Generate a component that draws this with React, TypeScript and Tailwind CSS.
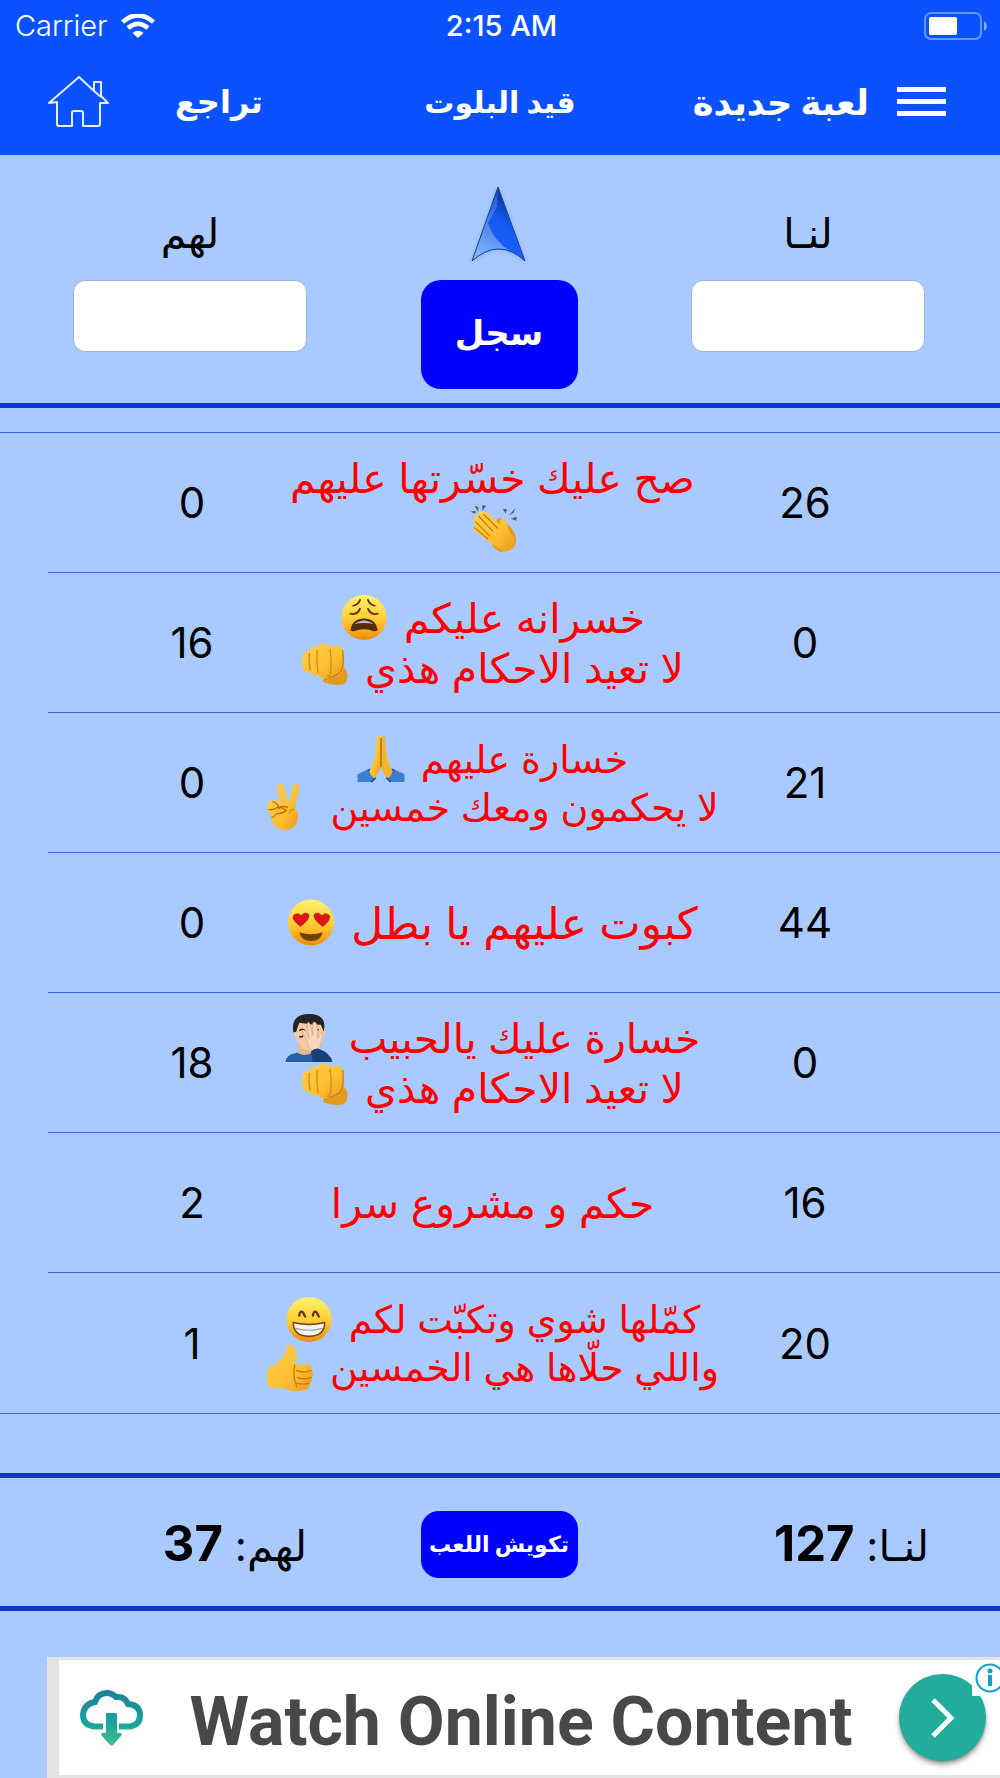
import type { ReactNode } from "react"

type EmojiName = "clap" | "weary" | "fist" | "pray" | "victory" | "hearts" | "facepalm" | "grin" | "thumb"

type Round = {
  us: number
  them: number
  size: string
  lines: { text: string; emoji?: EmojiName; wrap?: boolean }[]
}

const LARGE = "text-[44px] leading-[56px]"
const MEDIUM = "text-[41px] leading-[50px]"
const SMALL = "text-[38px] leading-[48px]"

const rounds: Round[] = [
  { us: 26, them: 0, size: MEDIUM, lines: [{ text: "صح عليك خسّرتها عليهم", emoji: "clap", wrap: true }] },
  {
    us: 0,
    them: 16,
    size: MEDIUM,
    lines: [
      { text: "خسرانه عليكم", emoji: "weary" },
      { text: "لا تعيد الاحكام هذي", emoji: "fist" },
    ],
  },
  {
    us: 21,
    them: 0,
    size: SMALL,
    lines: [
      { text: "خسارة عليهم", emoji: "pray" },
      { text: "لا يحكمون ومعك خمسين", emoji: "victory" },
    ],
  },
  { us: 44, them: 0, size: LARGE, lines: [{ text: "كبوت عليهم يا بطل", emoji: "hearts" }] },
  {
    us: 0,
    them: 18,
    size: MEDIUM,
    lines: [
      { text: "خسارة عليك يالحبيب", emoji: "facepalm" },
      { text: "لا تعيد الاحكام هذي", emoji: "fist" },
    ],
  },
  { us: 16, them: 2, size: MEDIUM, lines: [{ text: "حكم و مشروع سرا" }] },
  {
    us: 20,
    them: 1,
    size: SMALL,
    lines: [
      { text: "كمّلها شوي وتكبّت لكم", emoji: "grin" },
      { text: "واللي حلّاها هي الخمسين", emoji: "thumb" },
    ],
  },
]

const drawings: Record<EmojiName, ReactNode> = {
  clap: (
    <>
      <path d="M1 8l5-1 0 3zM5 2l4 1 0 5zM13 1l4 1-4 5zM34 5l4 0-1 5zM47 4l-2 5-5 3zM48 13l0 4-6-2z" fill="#5c5c5c" />
      <path d="M28 16q3-3 6 0l9 9q6 8 4 15-6 9-16 9l-8-6z" fill="#e69a17" />
      <path
        d="M6 14q-1-4 3-4 1-3 5-1 3-2 6 1l11 12q-1-7 3-7 3 0 5 7 1 6 5 11 6 8-1 13-7 5-14-1L6 28q-3-4 0-5-4-5 0-9z"
        fill="url(#skin)"
      />
      <path d="M14 10l15 15M9 12l15 16M6 18l15 15M5 24l14 12" stroke="#c77a0c" strokeWidth="1.2" fill="none" />
    </>
  ),
  weary: (
    <>
      <circle cx="24" cy="24" r="23" fill="url(#face)" />
      <path d="M13 12q5-1 7-6M28 6q2 5 7 6M10 20q7 2 10-5M28 15q3 7 10 5" stroke="#5a3008" strokeWidth="1.8" fill="none" strokeLinecap="round" />
      <path d="M10 37q2-12 14-12t14 12q-3 2-7 0-7-2-14 0-5 2-7 0z" fill="#552b09" />
      <path d="M14 31q10-8 20 0-10-3-20 0z" fill="#b9b9c2" />
    </>
  ),
  fist: (
    <>
      <path d="M22 37q0-3 6-3l12-14q7 6 7 12 0 7-4 9-9 2-17-1-4 0-4-3z" fill="#e19a1c" />
      <path
        d="M1 13q0-5 7-6 0-4 7-4 2-3 8-3 5 0 7 3 9-3 12 2 3 9 1 20-1 8-9 9l-10 1q-5 0-7-3-6 1-8-3-6 0-8-5-1-5 0-11z"
        fill="url(#skin)"
      />
      <path d="M8 9q-1 9 1 18M16 6q-1 12 1 24M29 5q2 12 1 22 0 5-4 6" stroke="#d58b12" strokeWidth="1.4" fill="none" />
      <path d="M42 6q2 16-2 22-4 5-12 6" stroke="#c07c0f" strokeWidth="1.2" fill="none" />
    </>
  ),
  pray: (
    <>
      <path d="M0 40l13-6 6 9-5 5H0zM48 40l-13-6-6 9 5 5h14z" fill="#3c7ed0" />
      <path d="M11 35l7 9-4 4M37 35l-7 9 4 4" stroke="#1f559f" strokeWidth="2" fill="none" />
      <path d="M20 2q2-2 4 0l0 31q-2 5-6 11-4 0-6-7 6-10 7-22z" fill="url(#skin)" />
      <path d="M28 2q-2-2-4 0l0 31q2 5 6 11 4 0 6-7-6-10-7-22z" fill="#f5b42d" />
      <path d="M24 3v30" stroke="#995b08" strokeWidth="1.2" />
    </>
  ),
  victory: (
    <>
      <path
        d="M11 5q-1-4 3-4 3 0 4 4l4 16 5-17q1-4 4-3 3 1 2 5l-4 20q4 3 3 10-1 12-14 12Q8 48 5 37l-1-6q-3-1-3-6-1-7 4-7l5-1 4 5z"
        fill="url(#skin)"
      />
      <path d="M6 19q6 1 7 8M2 27q5 1 9-2 5-1 9 3-4 4-9 3-5 5-6 4M12 25q5-2 10 0" stroke="#bd730b" strokeWidth="1.4" fill="none" />
      <path d="M28 27q-4 0-5 4" stroke="#d58b12" strokeWidth="1.2" fill="none" />
    </>
  ),
  hearts: (
    <>
      <circle cx="24" cy="24" r="23.500" fill="url(#face)" />
      <path d="M13 28Q4 21 6 17q4-4 8 0 4-5 8-1 1 5-9 12zM36 28q-10-7-9-12 4-4 8 1 4-4 8 0 1 5-7 11z" fill="#df1515" stroke="#b60b0b" strokeWidth=".6" />
      <path d="M12 34q12 4 24 0-2 9-12 9t-12-9z" fill="#754006" />
    </>
  ),
  facepalm: (
    <>
      <path d="M0 49q1-8 10-9l11-3 19 4q8 2 8 8z" fill="#285fa8" />
      <path d="M12 28l1 12q8 4 15-1l2-11z" fill="#e6b990" />
      <path d="M9 14Q9 4 24 4t15 12q3 2 0 7-2 14-14 14-11 0-14-13-5-4-2-10z" fill="#f2cba8" />
      <path d="M8 19Q5 0 24 0t15 18l-3-7q-11 0-22-2l-3 9z" fill="#242424" />
      <path d="M14 17q3-3 6 0M30 16h4M14 23q3 1 4-1" stroke="#382219" strokeWidth="1.5" fill="none" />
      <path d="M17 17q2-2 4 2l3 6-2-15q2-3 3 1l3 11V9q3-2 4 2l1 14 3-6q3 0 1 6l-2 10-6 5q-6-5-7-13z" fill="#f7d9bd" stroke="#dca985" strokeWidth=".8" />
      <path d="M26 38q5-4 9-2 11 4 12 13H28z" fill="#174079" />
    </>
  ),
  grin: (
    <>
      <circle cx="24" cy="24" r="23" fill="url(#face)" />
      <path d="M14 20q1-6 4-3l2 4M28 20q1-6 4-3l2 4" stroke="#683805" strokeWidth="2.4" fill="none" strokeLinecap="round" />
      <path d="M8 27q16 4 32 0 0 14-16 14T8 27z" fill="#f4f4f4" stroke="#78420b" strokeWidth="1.5" />
      <path d="M10 33q14 4 28 0" stroke="#9b9b9b" strokeWidth="1.2" fill="none" />
    </>
  ),
  thumb: (
    <>
      <path
        d="M20 5q0-5 5-4 6 3 6 13l-2 7h13q5 1 4 6 3 4 0 7 1 5-2 6 0 7-6 7-12 3-22-2-7 1-14-1-3-9 0-20 8-2 13-9 5-4 5-10z"
        fill="url(#skin)"
      />
      <path d="M46 27q-8 3-16 0M46 34q-8 3-15 0M44 40q-8 2-14 0M29 21q-3 10 2 23" stroke="#c97e0d" strokeWidth="1.4" fill="none" />
    </>
  ),
}

function Emoji({ name }: { name: EmojiName }) {
  return (
    <svg viewBox="0 0 48 49" className="-mt-[11px] -mb-[5px] inline-block size-12 align-middle" aria-hidden="true">
      {drawings[name]}
    </svg>
  )
}

function StatusBar() {
  return (
    <div className="grid h-13 grid-cols-3 items-center pr-3 pl-[15px] text-[29px] text-white">
      <div className="flex items-center gap-[14px] font-light">
        <span>Carrier</span>
        <svg viewBox="0 0 34 24" className="h-6 w-[34px]" fill="none" stroke="white">
          <path d="M1.5 8Q17-5.5 32.5 8" strokeWidth="4.6" />
          <path d="M7 14q10-8.500 20 0" strokeWidth="4.500" />
          <path d="M11.500 19q5.500-4.500 11 0L17 24z" fill="white" stroke="none" />
        </svg>
      </div>
      <span className="text-center font-medium">2:15 AM</span>
      <svg viewBox="0 0 64 28" className="h-7 w-16 justify-self-end">
        <rect x="1" y="1" width="56" height="26" rx="6" fill="none" stroke="#6696ff" strokeWidth="2" />
        <rect x="5" y="5" width="28" height="18" rx="2" fill="white" />
        <path d="M60 9q3 2 3 5t-3 5z" fill="#84a9ff" />
      </svg>
    </div>
  )
}

function NavBar() {
  return (
    <nav className="grid h-[103px] grid-cols-[1fr_auto_1fr] items-center px-12 pb-1 leading-10 font-bold text-white">
      <div className="flex items-center gap-[66px]">
        <button aria-label="الرئيسية">
          <svg viewBox="0 0 61 52" className="h-[52px] w-[61px]" fill="none" stroke="#e5edff" strokeWidth="2" strokeLinejoin="round">
            <path d="M1 27L31 1l15 14V6h7v14l7 7h-8v21q0 2-2 2H35V37q0-2-2-2h-7q-2 0-2 2v13H11q-2 0-2-2V26z" />
            <path d="M46 15l7 6" />
          </svg>
        </button>
        <button className="text-[32px]">تراجع</button>
      </div>
      <h1 className="text-[30px]">قيد البلوت</h1>
      <div className="flex items-center justify-end gap-7 pr-[6px]">
        <button className="text-[35px]">لعبة جديدة</button>
        <button aria-label="القائمة" className="flex flex-col gap-[7px]">
          <span className="h-[5px] w-[49px] bg-white" />
          <span className="h-[5px] w-[49px] bg-white" />
          <span className="h-[5px] w-[49px] bg-white" />
        </button>
      </div>
    </nav>
  )
}

function ScoreField({ id, label }: { id: string; label: string }) {
  return (
    <div className="flex w-[234px] flex-col items-center">
      <label htmlFor={id} className="flex h-[101px] items-center pt-2 text-[41px]">
        {label}
      </label>
      <input id={id} inputMode="numeric" className="h-[72px] w-full rounded-xl border border-[#9eb2d6] bg-white text-center text-[40px]" />
    </div>
  )
}

function EntryForm() {
  return (
    <form dir="rtl" className="flex items-start justify-between border-b-[5px] border-[#1230d8] pt-6 pr-[75px] pb-[14px] pl-[73px]" onSubmit={(e) => e.preventDefault()}>
      <ScoreField id="us" label="لنـا" />
      <div className="flex flex-col items-center">
        <div className="flex h-[101px] items-start">
          <svg viewBox="0 0 60 82" className="h-[82px] w-[60px] drop-shadow-sm">
            <defs>
              <linearGradient id="arrow" x1="0.700" y1="0" x2="0.300" y2="1">
                <stop offset="0" stopColor="#032a83" />
                <stop offset=".45" stopColor="#1459f0" />
                <stop offset="1" stopColor="#1c66ff" />
              </linearGradient>
              <linearGradient id="shine" x1="0.500" y1="0" x2="0.300" y2="1">
                <stop offset="0" stopColor="#1753c9" />
                <stop offset="1" stopColor="#86b8ff" />
              </linearGradient>
            </defs>
            <path d="M29 8L56 82Q30 58 3 82z" fill="url(#arrow)" />
            <path d="M29 8l-1 20-9 16q6 18 22 28-20-6-38 10z" fill="url(#shine)" />
            <path d="M29 8L56 82Q30 58 3 82z" fill="none" stroke="#12469f" strokeWidth="1" />
          </svg>
        </div>
        <button className="h-[109px] w-[157px] rounded-[20px] bg-[#0000ff] pb-1 text-[34px] font-bold text-white">سجل</button>
      </div>
      <ScoreField id="them" label="لهم" />
    </form>
  )
}

function RoundsTable() {
  return (
    <div className="mt-6 border-y border-[#3c63e6]">
      <div className="ml-12">
        <table dir="rtl" className="w-full table-fixed border-separate border-spacing-0">
          <colgroup>
            <col className="w-[265px]" />
            <col />
            <col className="w-[202px]" />
          </colgroup>
          <tbody>
            {rounds.map((round, index) => {
              const border = index < rounds.length - 1 ? "border-b border-[#3c63e6]" : ""
              return (
                <tr key={index} className="h-[140px]">
                  <td className={`pr-[125px] text-center text-[42px] ${border}`}>{round.us}</td>
                  <td className={`text-center whitespace-nowrap text-[#ff0000] ${round.size} ${border}`}>
                    {round.lines.map((line) => (
                      <div key={line.text}>
                        {line.text}
                        {line.wrap && <br />}
                        {line.emoji && !line.wrap && <span className="inline-block w-4" />}
                        {line.emoji && <Emoji name={line.emoji} />}
                      </div>
                    ))}
                  </td>
                  <td className={`pl-[86px] text-center text-[42px] ${border}`}>{round.them}</td>
                </tr>
              )
            })}
          </tbody>
        </table>
      </div>
    </div>
  )
}

function Totals() {
  return (
    <div dir="rtl" className="mt-[59px] flex h-[138px] items-center justify-between border-y-[5px] border-[#1230d8] pt-1 pr-[71px] pl-[69px] text-[42px]">
      <p className="w-[238px]">
        لنـا: <b className="text-[49px] font-bold">127</b>
      </p>
      <button className="h-[67px] w-[157px] rounded-[18px] bg-[#0000ff] text-[22px] font-bold text-white">تكويش اللعب</button>
      <p className="w-[238px]">
        لهم: <b className="text-[49px] font-bold">37</b>
      </p>
    </div>
  )
}

function AdBanner() {
  return (
    <a href="#" className="relative mt-[46px] ml-[47px] flex h-[121px] items-center justify-between border-y-[3px] border-l-12 border-[#e3e3e3] bg-white pr-[14px] pl-5">
      <svg viewBox="0 0 64 56" className="h-14 w-16" fill="none">
        <defs>
          <linearGradient id="cloud" x1="0" y1="0" x2="0" y2="56" gradientUnits="userSpaceOnUse">
            <stop stopColor="#1d7f9c" />
            <stop offset=".6" stopColor="#18a69a" />
            <stop offset="1" stopColor="#44c08d" />
          </linearGradient>
        </defs>
        <path d="M24 36.500H15Q4 35 4 24.500 5 14 16 12 19 3 28 3q5 0 9 4 9-1 12 7 12 1 12 11 0 10-10 11.500H40" stroke="url(#cloud)" strokeWidth="6" />
        <path d="M25 24h15v16H25z" fill="white" />
        <path d="M27 24q0-1 1-1h8q2 0 2 2v18h3q3 0 1 3l-8 9q-1 1-3 0l-8-9q-2-3 1-3h3z" fill="url(#cloud)" />
      </svg>
      <span className="pt-2 font-[Roboto] text-[68px] leading-none font-bold text-[#484848]">Watch Online Content</span>
      <span className="flex size-[87px] items-center justify-center rounded-full bg-[#22ac9b] shadow-md shadow-black/40">
        <svg viewBox="0 0 24 40" className="h-10 w-6" fill="none" stroke="white" strokeWidth="5">
          <path d="M2 2l18 18L2 38" />
        </svg>
      </span>
      <span className="absolute top-0 right-0 h-9 w-7 overflow-hidden bg-white">
        <svg viewBox="0 0 28 36" className="h-9 w-7">
          <circle cx="18" cy="18" r="13.500" fill="white" stroke="#11a0c8" strokeWidth="2" />
          <circle cx="18" cy="11" r="2.500" fill="#11a0c8" />
          <path d="M16 15h4v11h-4z" fill="#11a0c8" />
        </svg>
      </span>
    </a>
  )
}

export default function App() {
  return (
    <div className="min-h-screen bg-[#a9caff] font-[Inter,'DejaVu_Sans',sans-serif] text-black">
      <svg className="absolute size-0" aria-hidden="true">
        <defs>
          <linearGradient id="face" x1="0" y1="0" x2="0" y2="1">
            <stop offset="0" stopColor="#fff36b" />
            <stop offset=".55" stopColor="#ffcb32" />
            <stop offset="1" stopColor="#ee8c0b" />
          </linearGradient>
          <linearGradient id="skin" x1="0" y1="0" x2="1" y2="1">
            <stop offset="0" stopColor="#ffd04a" />
            <stop offset=".6" stopColor="#fdbf31" />
            <stop offset="1" stopColor="#e8981c" />
          </linearGradient>
        </defs>
      </svg>
      <header className="bg-[#0a52ff]">
        <StatusBar />
        <NavBar />
      </header>
      <main>
        <EntryForm />
        <RoundsTable />
        <Totals />
      </main>
      <AdBanner />
    </div>
  )
}
